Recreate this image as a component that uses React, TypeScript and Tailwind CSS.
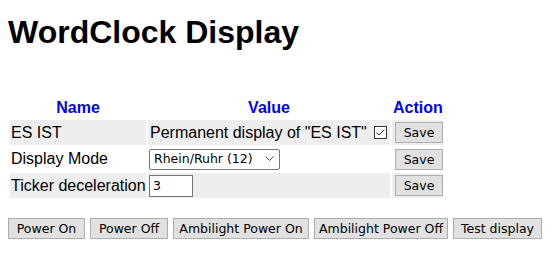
const ctrlFont = "font-['DejaVu_Sans',sans-serif] text-[12.5px] text-black";

const btn =
  'h-[21px] bg-[#e1e1e1] border border-[#adadad] ' + ctrlFont + ' leading-[19px] text-center whitespace-nowrap';

const bottomButtons = [
  { label: 'Power On', w: 'w-[77px]' },
  { label: 'Power Off', w: 'w-[78px]' },
  { label: 'Ambilight Power On', w: 'w-[136px]' },
  { label: 'Ambilight Power Off', w: 'w-[134px]' },
  { label: 'Test display', w: 'w-[89px]' },
];

const CheckedBox = () => (
  <svg width="13" height="13" viewBox="0 0 13 13" className="inline-block ml-[7px] align-[-1px]">
    <rect x="0.5" y="0.5" width="12" height="12" fill="#fff" stroke="#333" />
    <path d="M2.5 6.5 L5 9 L10.5 3.5" fill="none" stroke="#333" strokeWidth="1" />
  </svg>
);

const SaveButton = () => <button className={`${btn} w-[48px] ml-[2px] block`}>Save</button>;

export default function App() {
  return (
    <div className="min-h-[257px] bg-white pl-2 pt-[14px] font-['Liberation_Sans',Arial,sans-serif] text-black">
      <h1 className="text-[32px] font-bold leading-[37px]">WordClock Display</h1>

      {/* Settings */}
      <table className="mt-[44px] table-fixed w-[437px] border-separate border-spacing-[2px] text-[16px] leading-[18px]">
        <thead>
          <tr className="h-[21px]">
            <th className="w-[136px] p-[1px] text-[#0000ff] font-bold text-center">Name</th>
            <th className="w-[242px] p-[1px] text-[#0000ff] font-bold text-center">Value</th>
            <th className="w-[51px] p-[1px] text-[#0000ff] font-bold text-center">Action</th>
          </tr>
        </thead>
        <tbody>
          <tr className="h-[25px]">
            <td className="p-[1px] bg-[#eeeeee] whitespace-nowrap">ES IST</td>
            <td className="p-[1px] pl-[2px] bg-[#eeeeee] whitespace-nowrap">
              Permanent display of "ES IST"
              <CheckedBox />
            </td>
            <td className="p-[1px] bg-[#eeeeee]">
              <SaveButton />
            </td>
          </tr>
          <tr className="h-[24px]">
            <td className="p-[1px] whitespace-nowrap">Display Mode</td>
            <td className="p-[1px]">
              <div className={`w-[131px] h-[21px] border border-[#767676] rounded-[2px] bg-white flex items-center justify-between pl-[4px] pr-[5px] ${ctrlFont}`}>
                <span>Rhein/Ruhr (12)</span>
                <svg width="9" height="6" viewBox="0 0 9 6">
                  <path d="M0.5 0.5 L4.5 4.5 L8.5 0.5" fill="none" stroke="#555" strokeWidth="1" />
                </svg>
              </div>
            </td>
            <td className="p-[1px]">
              <SaveButton />
            </td>
          </tr>
          <tr className="h-[25px]">
            <td className="p-[1px] bg-[#eeeeee] whitespace-nowrap">Ticker deceleration</td>
            <td className="p-[1px] bg-[#eeeeee]">
              <div className={`w-[44px] h-[22px] border border-[#767676] bg-white pl-[3px] leading-[20px] ${ctrlFont}`}>3</div>
            </td>
            <td className="p-[1px] bg-[#eeeeee]">
              <SaveButton />
            </td>
          </tr>
        </tbody>
      </table>

      {/* Actions */}
      <div className="mt-[18px] flex gap-[5px]">
        {bottomButtons.map((b) => (
          <button key={b.label} className={`${btn} ${b.w}`}>
            {b.label}
          </button>
        ))}
      </div>
    </div>
  );
}
